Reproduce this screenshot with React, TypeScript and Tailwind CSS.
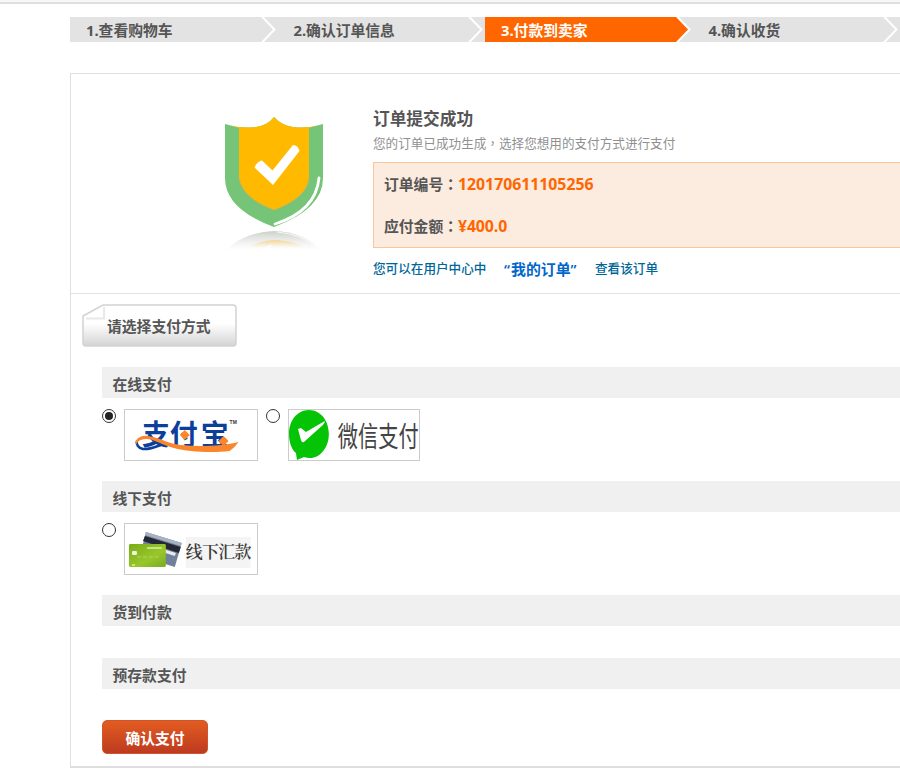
import { useState } from "react";

const STEPS = ["1.查看购物车", "2.确认订单信息", "3.付款到卖家", "4.确认收货", ""];
const CURRENT_STEP = 2;

function StepArrow({ active }: { active: boolean }) {
    return (
        <svg width="17" height="25" viewBox="0 0 17 25" className="shrink-0">
            <rect width="17" height="25" fill="#e3e3e3" />
            {active && <path d="M0 0H1L13 12.5L1 25H0Z" fill="#ff6600" />}
            <path d="M1 -0.5L13.5 12.5L1 25.5" fill="none" stroke="#fff" strokeWidth="2" />
        </svg>
    );
}

function Steps() {
    return (
        <div className="mt-[13px] ml-[70px] flex h-[25px]">
            {STEPS.map((label, i) => (
                <div key={i} className={`flex w-[207.5px] shrink-0 justify-between text-[14.8px] leading-[26px] font-bold whitespace-nowrap ${i === CURRENT_STEP ? "bg-[#ff6600] text-white" : "bg-[#e3e3e3] text-[#555]"}`}>
                    <span className="pl-4">{label}</span>
                    <StepArrow active={i === CURRENT_STEP} />
                </div>
            ))}
        </div>
    );
}

function Shield() {
    return (
        <svg width="110" height="144" viewBox="0 0 110 144" className="mt-[38px] ml-[149px] shrink-0">
            <defs>
                <linearGradient id="shadow" x1="0" y1="0" x2="0" y2="1">
                    <stop offset="0" stopColor="#aeb5aa" stopOpacity=".65" />
                    <stop offset="1" stopColor="#d8d8d8" stopOpacity="0" />
                </linearGradient>
                <linearGradient id="shadowGold" x1="0" y1="0" x2="0" y2="1">
                    <stop offset="0" stopColor="#f4cf7a" stopOpacity=".8" />
                    <stop offset="1" stopColor="#ffe7b0" stopOpacity="0" />
                </linearGradient>
            </defs>
            <path d="M5 12Q21 17 36 15Q48 13 54 5Q61 13 73 15Q87 17 103 12V66Q103 97 54 115Q5 97 5 66Z" fill="#75c477" />
            <path d="M5 12Q21 17 36 15Q48 13 54 5Q61 13 73 15Q87 17 103 12L89 16V66Q87 86 54 98Q22 86 19 66V16Z" fill="#ffba00" />
            <path d="M19 66Q22 86 54 98Q87 86 89 66" fill="none" stroke="#c3b65b" strokeWidth="1" />
            <path d="M34.5 55.5Q37 49.500 42 48.5L52.500 58.500L73 33Q78 33 79.500 39L53 73Z" fill="#fff" />
            <path d="M99 66Q96 99 55 112" fill="none" stroke="#fff" strokeWidth="2.800" strokeLinecap="round" />
            <path d="M6 138Q24 120 54 119Q84 120 101 138Z" fill="url(#shadow)" />
            <path d="M28 136Q38 129 54 128Q76 129 85 136Z" fill="url(#shadowGold)" />
            <path d="M42 138L52 132L48 138Z" fill="#fff" />
            <path d="M57 120Q82 122 98 136" fill="none" stroke="#fff" strokeWidth="1" opacity=".8" />
        </svg>
    );
}

// the TC face keeps full-width punctuation in the middle of its cell
const Punct = ({ children }: { children: string }) => <span lang="zh-TW" className="font-['Noto_Sans_CJK_TC']">{children}</span>;

function OrderInfo() {
    return (
        <div className="flex h-[220px] border-b border-[#e3e3e3]">
            <Shield />
            <div className="ml-[43px] w-[700px] shrink-0 pt-[33px]">
                <h1 className="text-[16.7px] leading-6 font-bold text-[#555]">订单提交成功</h1>
                <p className="h-6 text-[12.6px] leading-[23px] text-[#909090]">您的订单已成功生成<Punct>，</Punct>选择您想用的支付方式进行支付</p>
                <div className="mt-[7px] h-[86px] border border-[#fbc799] bg-[#fcebdf] pl-[10px] text-[14.8px] font-bold text-[#555]">
                    <p className="flex h-[42px] items-center">
                        <span className="w-[74px] shrink-0">订单编号<Punct>：</Punct></span>
                        <span className="pt-0.5 font-['Open_Sans'] text-[15.8px] text-[#ff6600]">120170611105256</span>
                    </p>
                    <p className="flex h-[42px] items-center">
                        <span className="w-[74px] shrink-0">应付金额<Punct>：</Punct></span>
                        <span className="pt-0.5 font-['Open_Sans'] text-[15.8px] tracking-[-0.1px] text-[#ff6600]">¥400.0</span>
                    </p>
                </div>
                <p className="flex h-[42px] items-center text-[12.6px] font-medium text-[#006699]">
                    <span className="w-[131px]">您可以在用户中心中</span>
                    <a className="flex w-[91px] items-center text-[14.9px] font-bold text-[#0066cc]">
                        <span className="w-[7px] font-['Open_Sans'] font-semibold">“</span>我的订单<span className="font-['Open_Sans'] font-semibold">”</span>
                    </a>
                    <span>查看该订单</span>
                </p>
            </div>
        </div>
    );
}

// folded paper label above the payment list
function FoldedTitle() {
    return (
        <div className="relative mt-[10px] ml-[11px] flex h-[43px] w-[155px] items-center pl-[25px]">
            <svg width="155" height="43" viewBox="0 0 155 43" className="absolute inset-0">
                <defs>
                    <linearGradient id="paper" x1="0" y1="0" x2="0" y2="1">
                        <stop offset=".45" stopColor="#fff" />
                        <stop offset="1" stopColor="#d4d4d4" />
                    </linearGradient>
                </defs>
                <path d="M1 12L21 1H151Q154 1 154 4V39Q154 42 151 42H4Q1 42 1 39Z" fill="url(#paper)" stroke="#d2d2d2" strokeWidth="1.500" />
                <path d="M2.500 13H21V2.500" fill="#fff" />
                <path d="M4 14.500H22V3" fill="none" stroke="#e8e8e8" strokeWidth="2" />
            </svg>
            <h2 className="relative pt-0.5 text-[14.8px] font-bold text-[#555]">请选择支付方式</h2>
        </div>
    );
}

function AlipayLogo() {
    return (
        <svg width="131.500" height="50" viewBox="0 0 132 50">
            <g fill="#0c3f9a" fontSize="28" fontWeight="700" fontFamily="Noto Sans CJK SC, sans-serif">
                <text x="17" y="35">支</text>
                <text x="45" y="35">付</text>
                <text x="76" y="35">宝</text>
            </g>
            <path d="M36 35C30 37 24 40 18 39C13 38 11 34 12 31" fill="none" stroke="#0c3f9a" strokeWidth="2.500" />
            <path d="M60 20L65 25L60 30L55 25ZM99 26L104 31L99 36L94 31Z" fill="#ff862b" />
            <path d="M11 35C9 30 15 25 23 26C34 27 43 34 56 35C76 37 98 36 114 32Q110 38 105 41C88 43 64 42 49 38C37 35 28 28 20 29C13 30 12 33 11 35Z" fill="#fa852c" />
            <text x="105" y="14" fontSize="5" fontWeight="700" fill="#333" fontFamily="Liberation Sans, sans-serif">TM</text>
        </svg>
    );
}

function WechatLogo() {
    return (
        <svg width="130.500" height="50" viewBox="0 0 131 50">
            <path d="M20 0C8 0 0 11 0 24C0 33 3 40 7 43L8 50L15 47C28 52 40 40 40 24C40 11 32 0 20 0Z" fill="#05c405" />
            <path d="M9 19L12 18L17 22L36 11Q36 13 34 15L15 32Q13 33 12 30Z" fill="#fff" />
            <g transform="translate(49 37) scale(.7 1)">
                <text fontSize="29" fill="#444" fontFamily="Noto Sans CJK SC, sans-serif">微信支付</text>
            </g>
        </svg>
    );
}

function RemitLogo() {
    return (
        <svg width="131.500" height="50" viewBox="0 0 132 50">
            <defs>
                <linearGradient id="card" x1="0" y1="0" x2="1" y2="1">
                    <stop offset="0" stopColor="#78ad19" />
                    <stop offset=".6" stopColor="#99c62b" />
                    <stop offset="1" stopColor="#78ad22" />
                </linearGradient>
            </defs>
            <path d="M21 8L57 19L50 43L15 32Z" fill="#71819b" />
            <path d="M21 8L57 19L56 22L20 11Z" fill="#a7b2c2" />
            <path d="M20 12L56 23L54 29L18 17Z" fill="#252735" />
            <path d="M26 21L51 29L50 32L25 24Z" fill="#e8ebef" />
            <rect x="4" y="20" width="37" height="23" rx="1.500" fill="url(#card)" />
            <rect x="7" y="27" width="5" height="4" rx="1" fill="#eef4df" />
            <path d="M22 24H37M7 41H10" stroke="#d9edae" strokeWidth="1.500" />
            <path d="M12 33H34" stroke="#b1d560" strokeDasharray="4 2" />
            <rect x="61" y="13" width="65" height="31" fill="#f4f4f4" />
            <text x="61" y="34" fontSize="17" textLength="66" fontWeight="600" fill="#3a3a3a" fontFamily="Noto Serif CJK SC, Noto Sans CJK SC, serif">线下汇款</text>
        </svg>
    );
}

const GROUPS = [
    { title: "在线支付", height: "h-[83px]", options: [{ key: "alipay", Logo: AlipayLogo }, { key: "wechat", Logo: WechatLogo }] },
    { title: "线下支付", height: "h-[83px]", options: [{ key: "remit", Logo: RemitLogo }] },
    { title: "货到付款", height: "h-[31.5px]", options: [] },
    { title: "预存款支付", height: "h-[31.5px]", options: [] },
];

export default function App() {
    const [method, setMethod] = useState("alipay");

    return (
        <div className="h-[774px] w-[900px] overflow-hidden bg-white font-['Noto_Sans','Noto_Sans_CJK_SC',sans-serif]" lang="zh-CN">
            <div className="h-1 border-b-2 border-[#dfdfdf] bg-[#f7f7f7]" />
            <Steps />
            <div className="mt-[31px] ml-[70px] h-[695px] w-[900px] border border-b-2 border-[#dfdfdf]">
                <OrderInfo />
                <FoldedTitle />
                <div className="mt-[20.4px] ml-[31px]">
                    {GROUPS.map(g => (
                        <section key={g.title}>
                            <h3 className="h-[31px] bg-[#f0f0f0] pl-[10.5px] text-[14.8px] leading-[34px] font-bold text-[#555]">{g.title}</h3>
                            <div className={`flex pt-[10.3px] ${g.height}`}>
                                {g.options.map(({ key, Logo }) => (
                                    <label key={key} className="mr-2 flex items-start">
                                        <input type="radio" name="payment" checked={method === key} onChange={() => setMethod(key)} className="peer sr-only" />
                                        <span className="mr-2 flex size-[14px] items-center justify-center rounded-full border border-[#333]">
                                            {method === key && <span className="size-2 rounded-full bg-[#222]" />}
                                        </span>
                                        <span className="border border-[#ccc]"><Logo /></span>
                                    </label>
                                ))}
                            </div>
                        </section>
                    ))}
                    <button className="block h-[34px] w-[106px] rounded-[5px] border border-[#d1542f] bg-linear-to-b from-[#e25c20] to-[#bd3b20] pt-0.5 text-[14.8px] font-bold text-white">确认支付</button>
                </div>
            </div>
        </div>
    );
}
